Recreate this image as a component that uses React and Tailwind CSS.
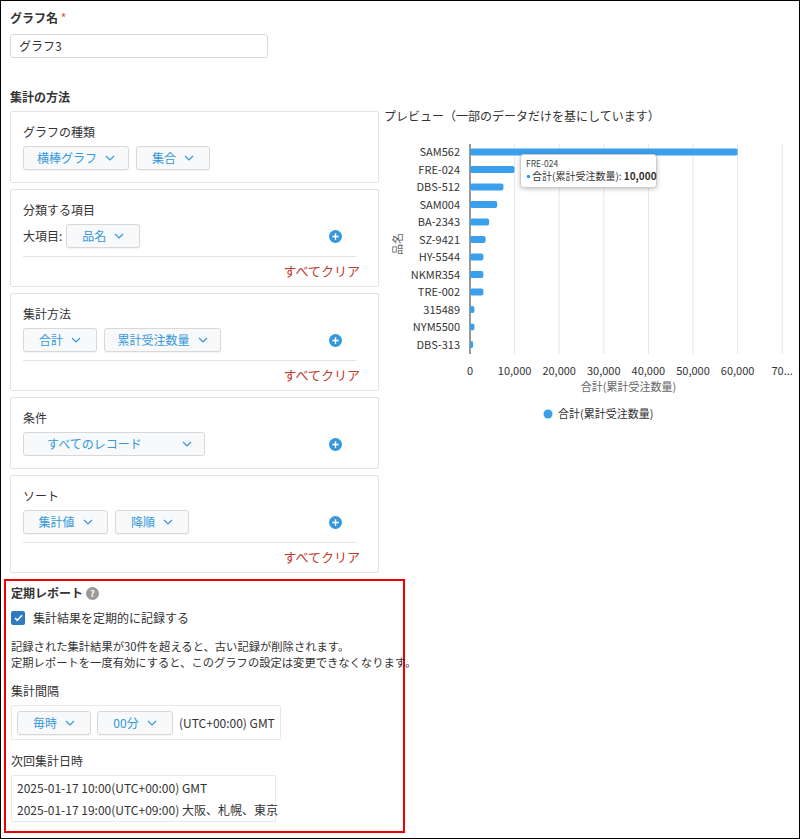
const F = { fontFamily: '"Noto Sans CJK JP", "Noto Sans", sans-serif' };

const Chev = () => (
  <svg width="10" height="6" viewBox="0 0 10 6" className="ml-2"><path d="M1 1l4 4 4-4" fill="none" stroke="#3498db" strokeWidth="1.2" /></svg>
);
const Btn = ({ children, w }) => (
  <div className={`h-[24px] ${w} border border-[#d8d8d8] rounded-[3px] bg-[#f7f9fa] flex items-center justify-center text-[12px] leading-none text-[#3498db] shadow-[0_1px_1px_rgba(0,0,0,0.05)]`}>
    {children}<Chev />
  </div>
);
const Plus = () => (
  <svg width="13" height="13" viewBox="0 0 14 14"><circle cx="7" cy="7" r="7" fill="#3498db" /><path d="M7 3.5v7M3.5 7h7" stroke="#fff" strokeWidth="1.6" /></svg>
);
const Panel = ({ title, children, clear }) => (
  <div className={`border border-[#e3e3e3] rounded-[2px] px-[12px] pt-[11px] ${clear ? "h-[98px]" : "h-[72px]"}`}>
    <div className="text-[12px] text-[#333] leading-[18px] mb-[5px]">{title}</div>
    {children}
    {clear && (
      <>
        <div className="border-t border-[#e3e3e3] mt-[8px] mr-[10px]" />
        <div className="text-right text-[13px] text-[#c0392b] mt-[5px] mr-[6px] leading-[18px]">すべてクリア</div>
      </>
    )}
  </div>
);

const data = [["SAM562",60000],["FRE-024",10000],["DBS-512",7500],["SAM004",6100],["BA-2343",4300],["SZ-9421",3500],["HY-5544",3000],["NKMR354",3000],["TRE-002",3000],["315489",1000],["NYM5500",1000],["DBS-313",700]];

function Chart() {
  const x0 = 86, sc = 44.6 / 10000, y0 = 45;
  return (
    <svg width="415" height="330" viewBox="0 0 415 330" style={F}>
      {[1,2,3,4,5,6,7].map(i => <line key={i} x1={x0 + i*44.6} x2={x0 + i*44.6} y1={45} y2={255} stroke="#e6e6e6" />)}
      <line x1={x0} x2={x0} y1={45} y2={255} stroke="#333" />
      {data.map(([n, v], i) => {
        const cy = y0 + 8 + i * 17.5;
        return (
          <g key={n}>
            <text x={x0 - 10} y={cy + 4} textAnchor="end" fontSize="11" fill="#333">{n}</text>
            <rect x={x0} y={cy - 3.5} width={Math.max(v*sc, 3)} height="7" rx="2" fill="#3aa0eb" />
          </g>
        );
      })}
      {["0","10,000","20,000","30,000","40,000","50,000","60,000","70..."].map((t, i) => (
        <text key={t} x={x0 + i*44.6} y={276} textAnchor="middle" fontSize="11" fill="#333">{t}</text>
      ))}
      <text x={x0 + 4*44.6 - 20} y={292} textAnchor="middle" fontSize="11" fill="#666">合計(累計受注数量)</text>
      <text transform="translate(18,145) rotate(-90)" textAnchor="middle" fontSize="11" fill="#666">品名</text>
      <circle cx="164" cy="319" r="4.5" fill="#3aa0eb" transform="translate(0,-4)" />
      <text x="174" y="319" fontSize="11" fill="#333">合計(累計受注数量)</text>
      <g>
        <rect x="136.5" y="55.5" width="136" height="33" rx="3" fill="#fff" stroke="#ccc" style={{ filter: "drop-shadow(0 1px 2px rgba(0,0,0,0.25))" }} />
        <text x="142" y="68" fontSize="8.5" fill="#444">FRE-024</text>
        <circle cx="144.5" cy="77.5" r="1.8" fill="#3aa0eb" />
        <text x="148" y="81" fontSize="10" fill="#333">合計(累計受注数量): <tspan fontWeight="bold">10,000</tspan></text>
      </g>
    </svg>
  );
}

export default function App() {
  return (
    <div style={F} className="w-[800px] h-[839px] border border-black bg-white relative overflow-hidden text-[#333]">
      <div className="pl-[9px] pt-[8px]">
        <div className="text-[12px] font-bold leading-[18px]">グラフ名 <span className="text-[#e74c3c] font-normal">*</span></div>
        <div className="mt-[7px] w-[258px] h-[24px] border border-[#d8d8d8] rounded-[3px] px-[8px] flex items-center text-[12px]">グラフ3</div>
        <div className="mt-[30px] text-[12px] font-bold leading-[18px]">集計の方法</div>
      </div>
      <div className="flex">
        <div className="ml-[9px] mt-[5px] w-[371px] flex flex-col gap-[6px]">
          <Panel title="グラフの種類">
            <div className="flex gap-[7px]"><Btn w="w-[106px]">横棒グラフ</Btn><Btn w="w-[74px]">集合</Btn></div>
          </Panel>
          <Panel title="分類する項目" clear>
            <div className="flex items-center text-[12px] h-[24px]">
              <span className="mr-[4px]">大項目:</span><Btn w="w-[74px]">品名</Btn>
              <div className="ml-auto mr-[24px]"><Plus /></div>
            </div>
          </Panel>
          <Panel title="集計方法" clear>
            <div className="flex items-center gap-[7px] h-[24px]"><Btn w="w-[74px]">合計</Btn><Btn w="w-[117px]">累計受注数量</Btn>
              <div className="ml-auto mr-[24px]"><Plus /></div></div>
          </Panel>
          <Panel title="条件">
            <div className="flex items-center h-[24px]"><div className="h-[24px] w-[182px] border border-[#d8d8d8] rounded-[3px] bg-[#f7f9fa] flex items-center justify-between pl-[23px] pr-[12px] text-[12px] text-[#3498db]">すべてのレコード<Chev /></div>
              <div className="ml-auto mr-[24px]"><Plus /></div></div>
          </Panel>
          <Panel title="ソート" clear>
            <div className="flex items-center gap-[7px] h-[24px]"><Btn w="w-[85px]">集計値</Btn><Btn w="w-[74px]">降順</Btn>
              <div className="ml-auto mr-[24px]"><Plus /></div></div>
          </Panel>
        </div>
        <div className="ml-[5px] mt-[1px]">
          <div className="text-[12px] leading-[18px]">プレビュー（一部のデータだけを基にしています）</div>
          <div className="-mt-[26px]"><Chart /></div>
        </div>
      </div>
      <div className="mt-[6px] ml-[3px] w-[401px] h-[254px] border-2 border-[#e00] px-[5px] pt-[3px]">
        <div className="flex items-center text-[12px] font-bold leading-[18px]">定期レポート
          <svg width="13" height="13" viewBox="0 0 14 14" className="ml-[3px]"><circle cx="7" cy="7" r="7" fill="#999" /><text x="7" y="10.5" textAnchor="middle" fontSize="10" fontWeight="bold" fill="#fff">?</text></svg>
        </div>
        <div className="flex items-center mt-[8px] text-[12px] leading-[16px]">
          <div className="w-[14px] h-[14px] bg-[#2f7ac3] rounded-[2px] flex items-center justify-center"><svg width="9" height="8" viewBox="0 0 9 8"><path d="M1 4l2.3 2.3L8 1.2" fill="none" stroke="#fff" strokeWidth="1.6" /></svg></div>
          <span className="ml-[8px]">集計結果を定期的に記録する</span>
        </div>
        <div className="mt-[12px] text-[11.3px] leading-[16px] whitespace-nowrap">記録された集計結果が30件を超えると、古い記録が削除されます。<br />定期レポートを一度有効にすると、このグラフの設定は変更できなくなります。</div>
        <div className="mt-[12px] text-[12px] leading-[18px]">集計間隔</div>
        <div className="mt-[5px] w-[270px] h-[35px] border border-[#e8e8e8] rounded-[2px] flex items-center px-[5px] gap-[6px] text-[12px]">
          <Btn w="w-[74px]">毎時</Btn><Btn w="w-[76px]">00分</Btn><span>(UTC+00:00) GMT</span>
        </div>
        <div className="mt-[12px] text-[12px] leading-[18px]">次回集計日時</div>
        <div className="mt-[5px] w-[265px] h-[47px] border border-[#e8e8e8] rounded-[2px] px-[5px] text-[12px] flex flex-col justify-center gap-[5px] leading-[17px] whitespace-nowrap">
          <div>2025-01-17 10:00(UTC+00:00) GMT</div>
          <div>2025-01-17 19:00(UTC+09:00) 大阪、札幌、東京</div>
        </div>
      </div>
    </div>
  );
}
